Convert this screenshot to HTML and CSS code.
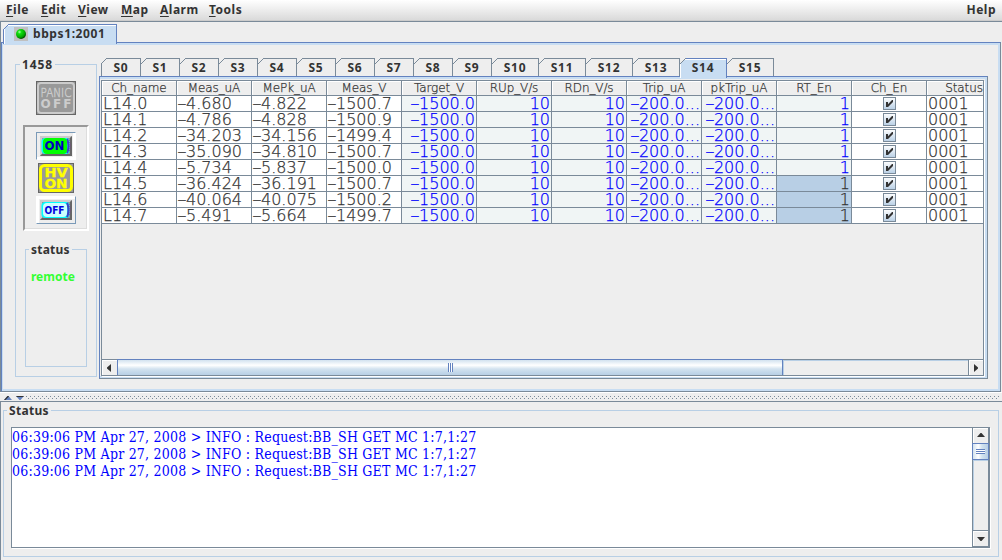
FILE: index.html
```html
<!DOCTYPE html>
<html>
<head>
  <meta charset="utf-8">
  <title>bbps1:2001</title>
  <link rel="stylesheet" href="styles.css">
</head>
<body>
  <nav class="menubar">
    <span class="m-file"><u>F</u>ile</span>
    <span class="m-edit"><u>E</u>dit</span>
    <span class="m-view"><u>V</u>iew</span>
    <span class="m-map"><u>M</u>ap</span>
    <span class="m-alarm"><u>A</u>larm</span>
    <span class="m-tools"><u>T</u>ools</span>
    <span class="m-help">Help</span>
  </nav>

  <main class="main">
    <div class="host-tabs">
      <div class="host-tab">
        <svg width="14" height="14" viewBox="0 0 14 14">
          <defs>
            <radialGradient id="led" cx="0.35" cy="0.3" r="0.75">
              <stop offset="0" stop-color="#b0ffb0"/>
              <stop offset="0.25" stop-color="#10e010"/>
              <stop offset="0.7" stop-color="#00a800"/>
              <stop offset="1" stop-color="#003800"/>
            </radialGradient>
          </defs>
          <rect width="14" height="14" fill="#c0c0c0"/>
          <circle cx="7" cy="7" r="5" fill="url(#led)"/>
        </svg>
        <span>bbps1:2001</span>
      </div>
    </div>

    <div class="host-pane">
      <div class="titled controls">
        <div class="title">1458</div>
        <svg class="panic" width="40" height="34" viewBox="0 0 40 34">
          <rect width="40" height="34" fill="#666"/>
          <rect x="1" y="1" width="38" height="32" fill="#999"/>
          <rect x="2" y="2" width="36" height="30" rx="3" fill="#999" stroke="#ccc" stroke-width="2"/>
          <text x="4.5" y="16" font-size="12" textLength="31" lengthAdjust="spacingAndGlyphs" font-weight="200" stroke="#ccc" stroke-width=".4" fill="#ccc">PANIC</text>
          <text x="4.5" y="27" font-size="12" textLength="31" font-weight="bold" fill="#ccc">OFF</text>
        </svg>
        <div class="power">
          <div class="btn pressed">
            <svg width="32" height="20" viewBox="0 0 32 20">
              <rect width="32" height="20" fill="#999"/>
              <path d="M0 20V0H32L30 2H2V18Z" fill="#ccc"/>
              <path d="M32 0V20H0L2 18H30V2Z" fill="#666"/>
              <rect x="1.5" y="2" width="28" height="16" rx="4" fill="#0ff"/>
              <path d="M27 3Q30 10 27 17" fill="none" stroke="#4040c8" stroke-width="2"/>
              <path d="M29 4Q31 10 29 16" fill="none" stroke="#8030a0" stroke-dasharray="1 1"/>
              <rect x="3" y="2" width="24" height="16" rx="4" fill="#0f0"/>
              <text x="4.5" y="14" font-size="12" textLength="20" lengthAdjust="spacingAndGlyphs" font-weight="bold" fill="#0000c0">ON</text>
            </svg>
          </div>
          <svg class="hv" width="36" height="30" viewBox="0 0 36 30">
            <rect width="36" height="30" fill="#666"/>
            <rect x="1" y="1" width="34" height="28" fill="#999"/>
            <rect x="2.5" y="2.5" width="31" height="25" rx="4" fill="#999" stroke="#ff0" stroke-width="3"/>
            <text x="6.5" y="14" font-size="12" textLength="23" lengthAdjust="spacingAndGlyphs" stroke="#ff0" stroke-width=".3" fill="#ff0">HV</text>
            <text x="6.5" y="25" font-size="12" textLength="23" lengthAdjust="spacingAndGlyphs" stroke="#ff0" stroke-width=".3" fill="#ff0">ON</text>
          </svg>
          <div class="btn">
            <svg width="32" height="20" viewBox="0 0 32 20">
              <rect width="32" height="20" fill="#999"/>
              <path d="M0 20V0H32L30 2H2V18Z" fill="#ccc"/>
              <path d="M32 0V20H0L2 18H30V2Z" fill="#666"/>
              <rect x="1.5" y="2" width="28" height="16" rx="4" fill="#0ff"/>
              <path d="M27 3Q30 10 27 17" fill="none" stroke="#4040c8" stroke-width="2"/>
              <path d="M29 4Q31 10 29 16" fill="none" stroke="#8030a0" stroke-dasharray="1 1"/>
              <rect x="3" y="3" width="24" height="14" rx="4" fill="#cff"/>
              <text x="4.5" y="14" font-size="11" textLength="20" lengthAdjust="spacingAndGlyphs" font-weight="bold" fill="#0000e0">OFF</text>
            </svg>
          </div>
        </div>
        <div class="titled link">
          <div class="title">status</div>
          <div class="remote">remote</div>
        </div>
      </div>

      <div class="slots">
        <div class="slot-tabs" id="slotTabs"></div>
        <div class="slot-pane">
          <div class="scroll-pane">
            <div class="view">
              <table>
                <thead><tr id="head"></tr></thead>
                <tbody id="rows"></tbody>
              </table>
            </div>
            <div class="hbar">
              <div class="arrow"><svg width="4" height="8" viewBox="0 0 4 8"><path d="M4 0V8L0 4.5V3.5Z" fill="#333"/></svg></div>
              <div class="thumb"><i></i></div>
              <div class="track"></div>
              <div class="arrow right"><svg width="4" height="8" viewBox="0 0 4 8"><path d="M0 0V8L4 4.5V3.5Z" fill="#333"/></svg></div>
            </div>
          </div>
        </div>
      </div>
    </div>
  </main>

  <div class="divider">
    <svg width="22" height="4" viewBox="0 0 22 4">
      <path d="M0 4L3.5 0H4.5L8 4Z" fill="#6382bf"/>
      <path d="M0 4L3.5 0H4.5L5 .6L1.5 4Z" fill="#333"/>
      <path d="M12 0H20L16.5 4H15.5Z" fill="#6382bf"/>
      <path d="M12 0H20L19 1H13Z" fill="#333"/>
    </svg>
    <div class="dots"></div>
  </div>

  <section class="log-panel">
    <div class="titled log-box">
      <div class="title">Status</div>
      <div class="log">
        <div class="lines">
          <p>06:39:06 PM Apr 27, 2008 &gt; INFO : Request:BB_SH GET MC 1:7,1:27</p>
          <p>06:39:06 PM Apr 27, 2008 &gt; INFO : Request:BB_SH GET MC 1:7,1:27</p>
          <p>06:39:06 PM Apr 27, 2008 &gt; INFO : Request:BB_SH GET MC 1:7,1:27</p>
        </div>
        <div class="vbar">
          <div class="arrow"><svg width="8" height="4" viewBox="0 0 8 4"><path d="M0 4H8L4.5 0H3.5Z" fill="#333"/></svg></div>
          <div class="thumb"><i></i></div>
          <div class="track"></div>
          <div class="arrow down"><svg width="8" height="4" viewBox="0 0 8 4"><path d="M0 0H8L4.5 4H3.5Z" fill="#333"/></svg></div>
        </div>
      </div>
    </div>
  </section>

  <script src="app.js"></script>
</body>
</html>
```
FILE: styles.css
```css
* {
  margin: 0;
  padding: 0;
  box-sizing: border-box;
}

body {
  width: 1002px;
  height: 560px;
  overflow: hidden;
  display: flex;
  flex-direction: column;
  background: #eee;
  color: #333;
  font: bold 12px/16px "Noto Sans", sans-serif;
}

svg {
  display: block;
  flex: none;
}

svg text {
  font-family: "DejaVu Sans", sans-serif;
}

.menubar {
  height: 21px;
  flex: none;
  display: flex;
  padding: 2px 6px 0;
  background: linear-gradient(#fff, #dadada);
  border-bottom: 1px solid #ccc;
  letter-spacing: 0.5px;
}

.menubar span { flex: none; }
.menubar u { text-underline-offset: 2px; }
.m-file { width: 35px; }
.m-edit { width: 37px; }
.m-view { width: 43px; }
.m-map { width: 39px; }
.m-alarm { width: 49px; }
.menubar .m-help { margin-left: auto; }

.main {
  height: 371px;
  flex: none;
  display: flex;
  flex-direction: column;
  border-top: 1px solid #7a8a99;
  border-left: 1px solid #7a8a99;
}

/* outer tab strip */
.host-tabs {
  height: 20px;
  padding: 2px 0 0 2px;
}

.host-tab {
  position: relative;
  z-index: 1;
  display: flex;
  gap: 5px;
  width: 114px;
  height: 20px;
  padding: 1px 0 0 10px;
  background: #c8ddf2;
  border: 1px solid #6382bf;
  border-bottom: 0;
  box-shadow: inset 1px 1px #fff;
  letter-spacing: 0.6px;
}

.host-tab svg { margin-top: 1px; }

.host-tab::before,
.slot-tab::before {
  content: '';
  position: absolute;
  top: -1px;
  left: 0;
  width: 6px;
  height: 6px;
  background: linear-gradient(135deg, #eee 42%, #7a8a99 42%, #7a8a99 58%, transparent 58%);
}

.host-tab::before {
  left: -1px;
  background: linear-gradient(135deg, #eee 42%, #6382bf 42%, #6382bf 58%, transparent 58%);
}

.host-pane {
  flex: 1;
  width: 1000px;
  display: flex;
  border: 1px solid #6382bf;
  border-right-color: #7a8a99;
  border-bottom-color: #7a8a99;
  box-shadow: inset 0 2px #c8ddf2, inset 1px 0 #c8ddf2, inset -2px -2px #c8ddf2;
  padding: 15px 12px 12px 13px;
}

.titled {
  border: 1px solid #b8cfe5;
}

.title {
  width: fit-content;
  padding: 0 2px;
  background: #eee;
}

.controls {
  width: 82px;
  height: 313px;
  margin-top: 6px;
}

.controls > .title {
  margin: -8px 0 0 4px;
  letter-spacing: 0.9px;
}

.panic { margin: 8px 0 0 20px; }

.power {
  width: 66px;
  height: 106px;
  margin: 10px 0 0 7px;
  padding: 5px 0 0 11px;
  border: 2px solid #fff;
  border-top-color: #999;
  border-left-color: #999;
  box-shadow: inset -1px -1px #ddd;
}

.btn {
  width: 40px;
  height: 28px;
  padding: 3px;
  border: 1px solid #fff;
  border-right-color: #7a9ab8;
  border-bottom-color: #7a9ab8;
  box-shadow: inset 2px 2px #fff;
}

.btn.pressed {
  border-color: #7a9ab8 #fff #fff #7a9ab8;
  box-shadow: inset -2px -2px #fff;
}

.hv { margin: 3px 0 3px 2px; }

.link {
  width: 62px;
  height: 118px;
  margin: 18px 0 0 9px;
}

.link .title {
  margin: -8px 0 0 3px;
  letter-spacing: 0.2px;
}

.remote {
  margin: 11px 0 0 5px;
  color: #3f3;
}

/* slot tabs */
.slots {
  width: 889px;
  margin-left: 2px;
}

.slot-tabs {
  display: flex;
  height: 18px;
  padding-left: 2px;
}

.slot-tab {
  position: relative;
  width: 39px;
  height: 18px;
  border-top: 1px solid #7a8a99;
  border-right: 1px solid #7a8a99;
  text-align: center;
  line-height: 18px;
  letter-spacing: 0.8px;
}

.slot-tab:first-child {
  width: 40px;
  border-left: 1px solid #7a8a99;
}

.slot-tab:first-child::before { left: -1px; }
.slot-tab.wide { width: 47px; }

.slot-tab.active {
  height: 20px;
  z-index: 1;
  background: #c8ddf2;
  border-color: #6382bf;
  box-shadow: inset 1px 1px #fff;
}

.slot-pane {
  height: 303px;
  border: 1px solid #6382bf;
  border-right-color: #7a8a99;
  border-bottom-color: #7a8a99;
  box-shadow: inset 0 2px #c8ddf2, inset -2px -2px #c8ddf2;
  padding: 3px 3px 3px 1px;
}

.scroll-pane {
  width: 883px;
  height: 296px;
  border: 1px solid #7a8a99;
  border-bottom: 0;
  box-shadow: 1px 1px #fff;
}

.view {
  height: 278px;
  overflow: hidden;
}

table {
  width: 900px;
  table-layout: fixed;
  border-collapse: separate;
  border-spacing: 0;
  font: 200 16px/15px "DejaVu Sans", sans-serif;
  -webkit-text-stroke: 0.25px currentColor;
}

th {
  height: 15px;
  font-size: 12px;
  font-weight: 200;
  line-height: 14px;
  letter-spacing: -0.1px;
  background: #eee;
  border-right: 1px solid #7a8a99;
  border-bottom: 1px solid #7a8a99;
  box-shadow: inset 1px 1px #fff;
}

td {
  height: 16px;
  padding: 0 1px;
  background: #fff;
  border-right: 1px solid #7a8a99;
  border-bottom: 1px solid #7a8a99;
  white-space: nowrap;
}

td.edit {
  background: #f0f5f5;
  color: #00f;
  text-align: right;
}

td.selected {
  background: #b8cfe5;
  color: #333;
}

/* stretched sign */
td b {
  display: inline-block;
  width: 8px;
  font-weight: 200;
  text-align: center;
  transform: scaleX(1.7);
}

.check {
  margin: 0 auto;
}

/* scroll bars */
.hbar {
  display: flex;
  height: 17px;
  border-top: 1px solid #7a8a99;
  border-bottom: 1px solid #7a8a99;
}

.hbar .arrow {
  width: 15px;
  padding: 4px 0 0 5px;
  box-shadow: inset 1px 1px #fff;
}

.hbar .right {
  border-left: 1px solid #7a8a99;
}

.hbar .thumb {
  width: 666px;
  margin-top: -1px;
  border: 1px solid #6382bf;
  border-bottom: 0;
  background: linear-gradient(#d2e2ef, #fff 35%, #d2e2ef 60%, #b8cfe5);
}

.hbar .thumb i {
  display: block;
  width: 5px;
  height: 9px;
  margin: 3px auto 0;
  background: repeating-linear-gradient(90deg, #6382bf 0 1px, #fff 1px 2px);
}

.hbar .track {
  flex: 1;
  box-shadow: inset 1px 1px #b8cfe5;
}

.divider {
  display: flex;
  height: 9px;
  flex: none;
  padding: 3px 0 0 4px;
  border-top: 1px solid #fff;
}

.dots {
  width: 974px;
  height: 3px;
  background:
    repeating-linear-gradient(90deg, #7a8a99 0 1px, transparent 1px 4px) 0 0 / 100% 1px no-repeat,
    repeating-linear-gradient(90deg, transparent 0 2px, #7a8a99 2px 3px, transparent 3px 4px) 0 2px / 100% 1px no-repeat;
}

.log-panel {
  flex: 1;
  padding: 8px 3px 3px 2px;
  border-top: 1px solid #7a8a99;
  border-left: 1px solid #7a8a99;
}

.log-box {
  height: 147px;
}

.log-box > .title {
  margin: -8px 0 0 3px;
  letter-spacing: 0.3px;
}

.log {
  display: flex;
  width: 979px;
  height: 121px;
  margin: 8px 0 0 7px;
  background: #fff;
  border: 1px solid #7a8a99;
  box-shadow: 1px 1px #fff;
}

.lines {
  flex: 1;
  padding-top: 1px;
  color: #00f;
  font: 14px/17px "DejaVu Serif Condensed", "DejaVu Serif", serif;
  font-stretch: condensed;
  letter-spacing: 0.22px;
}

.lines p {
  white-space: nowrap;
}

.vbar {
  width: 17px;
  display: flex;
  flex-direction: column;
  background: #eee;
  border-left: 1px solid #7a8a99;
  border-right: 1px solid #7a8a99;
}

.vbar .arrow {
  height: 15px;
  padding: 5px 0 0 4px;
  box-shadow: inset 1px 1px #fff;
}

.vbar .down {
  height: 17px;
  padding-top: 6px;
  border-top: 1px solid #7a8a99;
  border-bottom: 1px solid #7a8a99;
}

.vbar .thumb {
  height: 17px;
  margin: 0 -1px;
  border: 1px solid #6382bf;
  background: linear-gradient(90deg, #d2e2ef, #fff 35%, #d2e2ef 60%, #b8cfe5);
}

.vbar .thumb i {
  display: block;
  width: 9px;
  height: 5px;
  margin: 5px auto 0;
  background: repeating-linear-gradient(#6382bf 0 1px, #fff 1px 2px);
}

.vbar .track {
  flex: 1;
  box-shadow: inset 1px 1px #b8cfe5;
}
```
FILE: app.js
```js
const columns = ['Ch_name', 'Meas_uA', 'MePk_uA', 'Meas_V', 'Target_V', 'RUp_V/s',
  'RDn_V/s', 'Trip_uA', 'pkTrip_uA', 'RT_En', 'Ch_En', 'Status'];

const channels = [
  ['L14.0', '-4.680', '-4.822', '-1500.7'],
  ['L14.1', '-4.786', '-4.828', '-1500.9'],
  ['L14.2', '-34.203', '-34.156', '-1499.4'],
  ['L14.3', '-35.090', '-34.810', '-1500.7'],
  ['L14.4', '-5.734', '-5.837', '-1500.0'],
  ['L14.5', '-36.424', '-36.191', '-1500.7'],
  ['L14.6', '-40.064', '-40.075', '-1500.2'],
  ['L14.7', '-5.491', '-5.664', '-1499.7']
];

const settings = ['-1500.0', '10', '10', '-200.0...', '-200.0...', '1'];

const check = `<svg class="check" width="13" height="13" viewBox="0 0 13 13">
  <defs><linearGradient id="box" x2="0" y2="1"><stop stop-color="#fff"/><stop offset="1" stop-color="#b8cfe5"/></linearGradient></defs>
  <rect x=".5" y=".5" width="12" height="12" fill="url(#box)" stroke="#7a8a99"/>
  <path d="M3 5H5V7.3L9 3H10V5L5 10H3Z" fill="#333"/></svg>`;

function sign(text) {
  return text.replace('-', '<b>-</b>');
}

// Slot tabs S0..S15
let tabs = '';
for (let i = 0; i < 16; i++) {
  tabs += `<div class="slot-tab${i > 9 ? ' wide' : ''}${i === 14 ? ' active' : ''}">S${i}</div>`;
}
document.getElementById('slotTabs').innerHTML = tabs;

document.getElementById('head').innerHTML = columns.map(c => `<th>${c}</th>`).join('');

document.getElementById('rows').innerHTML = channels.map((ch, row) => {
  const measured = ch.map(v => `<td>${sign(v)}</td>`).join('');
  const edits = settings.map((v, col) =>
    `<td class="edit${col === 5 && row > 4 ? ' selected' : ''}">${sign(v)}</td>`).join('');
  return `<tr>${measured}${edits}<td>${check}</td><td>0001</td></tr>`;
}).join('');
```
